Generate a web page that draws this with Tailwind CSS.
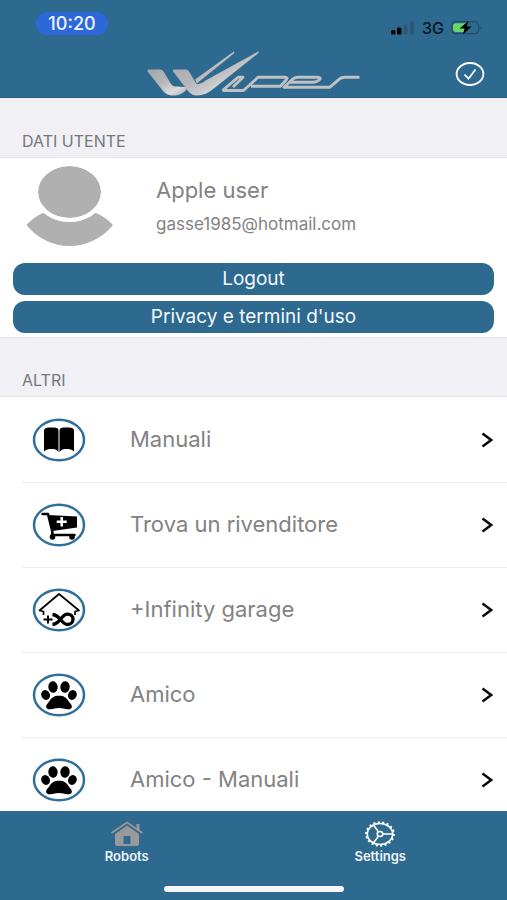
<!DOCTYPE html>
<html lang="it">
<head>
<meta charset="utf-8">
<meta name="viewport" content="width=device-width, initial-scale=1">
<title>Wiper</title>
<script src="https://cdn.jsdelivr.net/npm/@tailwindcss/browser@4"></script>
</head>
<body class="flex h-screen flex-col overflow-hidden bg-white font-['Inter','Liberation_Sans',sans-serif] text-[#828282]">

<svg class="hidden" aria-hidden="true">
  <symbol id="ring" viewBox="0 0 54 44"><ellipse cx="27" cy="22" rx="25" ry="20.3" fill="#fff" stroke="#2f6f9b" stroke-width="2.500"/></symbol>
  <symbol id="paw" viewBox="0 0 54 44">
    <ellipse cx="13.6" cy="22" rx="4.300" ry="5" transform="rotate(-25 13.6 22)"/>
    <ellipse cx="21" cy="14" rx="4.700" ry="5.700" transform="rotate(-8 21 14)"/>
    <ellipse cx="33" cy="14" rx="4.700" ry="5.700" transform="rotate(8 33 14)"/>
    <ellipse cx="40.4" cy="22" rx="4.300" ry="5" transform="rotate(25 40.4 22)"/>
    <path d="M27 22.800c5 0 7.500 2 9.500 5.200 1.600 2.500 3.600 3.700 3.400 5.900-.3 2-2.400 2.500-4.400 2.300-3-.3-5-1.200-8.500-1.200s-5.500.9-8.500 1.200c-2 .2-4.100-.3-4.400-2.300-.2-2.200 1.800-3.400 3.400-5.900 2-3.200 4.500-5.200 9.500-5.200z"/>
  </symbol>
  <symbol id="chevron" viewBox="0 0 12 16"><path d="M1.500 1.500 10.200 8 1.500 14.500" fill="none" stroke="#0b0b0b" stroke-width="2.500"/></symbol>
</svg>

<header class="shrink-0 border-b border-[#245a7d] bg-[#2e6990]">
  <div class="flex h-12 items-start justify-between pt-3 pr-6 pl-9">
    <time class="flex h-[23px] w-[72px] items-center justify-center rounded-full bg-[#2d68d8] text-lg leading-none font-medium text-[#eef4ff]">10:20</time>
    <div class="mt-1 flex h-6 items-center gap-[7px] text-[#071622]">
      <svg class="h-3.5 w-6" viewBox="0 0 24 14" role="img" aria-label="Segnale">
        <rect x="0" y="9" width="4.500" height="4.500" rx="1.500"/><rect x="6" y="6.500" width="4.500" height="7" rx="1.500"/>
        <rect x="12.500" y="3.500" width="4" height="10" rx="1.500" fill="#2a587a"/><rect x="19" y="0.500" width="4" height="13" rx="1.500" fill="#2a587a"/>
      </svg>
      <span class="text-base font-medium">3G</span>
      <svg class="h-4 w-8" viewBox="0 0 32 16" role="img" aria-label="Batteria in carica">
        <rect x="0.700" y="1.700" width="27" height="12" rx="4" fill="none" stroke="#214d68" stroke-width="1.200"/>
        <path d="M5 3.300h10v8.800H5a3 3 0 0 1-3-3V6.300a3 3 0 0 1 3-3z" fill="#68d66b"/>
        <path d="M29.500 6v3.500c1.800-.6 1.800-2.900 0-3.500z" fill="#214d68"/>
        <path d="M17.500 1 8.500 8.500h5l-1.500 6 8.500-8h-5z"/>
      </svg>
    </div>
  </div>
  <div class="grid h-[49px] grid-cols-[1fr_214px_1fr] items-center">
    <svg class="col-start-2 h-[49px] w-[214px]" viewBox="147 48 214 49" role="img" aria-label="Wiper">
      <defs>
        <linearGradient id="metal" x1="0" y1="0" x2="1" y2="1"><stop offset="0" stop-color="#a4a8aa"/><stop offset=".45" stop-color="#b4b6b8"/><stop offset=".75" stop-color="#dcdcdc"/><stop offset="1" stop-color="#a9aaac"/></linearGradient>
      </defs>
      <path fill="url(#metal)" d="M148.500 69.500H160c2 0 3 1 4.200 3l6.500 11c1.500 2.500 3.300 3 6.300 3l8 .5 1.500 2.500c-3.500 4-7.500 6-13.500 6-5.500 0-8.500-2.500-11.500-6.500l-13.500-17c-1-1.500-.7-2.500.5-2.500z"/>
      <path fill="url(#metal)" d="M195 79.500 234.500 51l-.7 2.500-37 30z"/>
      <path fill="url(#metal)" d="M174 69.500H185.500c2 0 3 1 4.200 3l6.800 11.500c3 .5 6-1 9-3.500L259 51l-.8 2.300-43.700 34.700c-5 4.500-11 7.500-18 7.500-4.500 0-7.500-3-10-6.500l-13-17c-1-1.500-.7-2.500.5-2.500z"/>
      <g fill="none" stroke="#bfc1c3" stroke-width="2.900" stroke-linejoin="round">
        <path d="M222.500 90.500H243.500L258 77.300H284.500C288.500 77.300 287 79.300 285 81.300L280.500 86.300H251"/>
        <path d="M222.500 90.500 238 77.300H243L233 87"/>
        <path d="M289 82.300H313.500C317.500 82.300 324 77.300 317.500 77.300H297.500C295 77.300 293.500 78.300 292 79.800L284 87.200H330L339 79.300C341 77.500 342.500 77.300 345 77.300H359.500"/>
      </g>
    </svg>
    <button type="button" aria-label="Conferma" class="mr-[22px] justify-self-end">
      <svg class="h-[26px] w-[30px]" viewBox="0 0 30 26" fill="none" stroke="#fff" stroke-width="1.800"><ellipse cx="15" cy="14" rx="13.400" ry="11"/><path d="m9.500 14.500 4 4.200 7-9.200"/></svg>
    </button>
  </div>
</header>

<main class="min-h-0 flex-1 overflow-hidden">
  <section>
    <h2 class="flex h-[60px] items-end border-b border-[#e6e6e9] bg-[#f0f0f5] px-[22px] pb-1 text-base text-[#77777c]">DATI UTENTE</h2>
    <div class="flex h-[105px] items-start">
      <svg class="mt-2 ml-[26px] h-[82px] w-[88px] shrink-0" viewBox="0 0 88 82" fill="#b0b0b0" role="img" aria-label="Profilo">
        <ellipse cx="43.500" cy="26" rx="31.500" ry="26"/>
        <path d="M17.500 46.700C31 58.700 56 58.700 69.500 46.700c6.500 2.500 12 6.500 17.500 12.300C64 87 23 87 .5 59 6 53.200 11 49.200 17.500 46.700z"/>
        <ellipse cx="43.500" cy="26" rx="33.500" ry="28" fill="none" stroke="#fff" stroke-width="4"/>
      </svg>
      <div class="ml-[42px] pt-5">
        <p class="text-[22px] leading-6">Apple user</p>
        <p class="mt-3 text-[17px] leading-5">gasse1985@hotmail.com</p>
      </div>
    </div>
    <div class="flex flex-col gap-1.5 px-[13px] pb-1 text-[19px] text-[#f4f8fb]">
      <button type="button" class="h-8 rounded-xl bg-[#2e6990]">Logout</button>
      <button type="button" class="h-8 rounded-xl bg-[#2e6990]">Privacy e termini d'uso</button>
    </div>
  </section>

  <section>
    <h2 class="flex h-[60px] items-end border-y border-[#e6e6e9] bg-[#f0f0f5] px-[22px] pb-1 text-base text-[#77777c]">ALTRI</h2>
    <ul class="text-[22px]">
      <li><a href="#manuali" class="flex h-[85px] items-center pr-[14px] pl-8">
        <svg class="h-11 w-[54px]" viewBox="0 0 54 44" aria-hidden="true"><use href="#ring"/><path d="M12 12.500C12 10.500 14 9.500 17 9.500h5c3 0 4.500 1 4.500 3V34c-2-2.500-4-3-7-3-3 0-5.500.5-7.500 2.500zM42 12.500c0-2-2-3-5-3h-5c-3 0-4.500 1-4.500 3V34c2-2.500 4-3 7-3 3 0 5.500.5 7.500 2.500z"/></svg>
        <span class="ml-11 flex-1">Manuali</span><svg class="h-4 w-3" aria-hidden="true"><use href="#chevron"/></svg></a></li>
      <li class="relative before:absolute before:top-0 before:right-0 before:left-[22px] before:h-px before:bg-[#ececec]"><a href="#rivenditore" class="flex h-[85px] items-center pr-[14px] pl-8">
        <svg class="h-11 w-[54px]" viewBox="0 0 54 44" aria-hidden="true"><use href="#ring"/><path d="M16 12 45 13.500V24.500L20.500 28z"/><path d="M10.500 11H16l4.500 18.500-.5 2.500H42.500" fill="none" stroke="#000" stroke-width="2.500" stroke-linejoin="round" stroke-linecap="round"/><circle cx="20.500" cy="34" r="2.800"/><circle cx="40" cy="34" r="2.800"/><path d="M29.700 14v9.500M24.700 18.700h10" stroke="#fff" stroke-width="2.500"/></svg>
        <span class="ml-11 flex-1">Trova un rivenditore</span><svg class="h-4 w-3" aria-hidden="true"><use href="#chevron"/></svg></a></li>
      <li class="relative before:absolute before:top-0 before:right-0 before:left-[22px] before:h-px before:bg-[#ececec]"><a href="#garage" class="flex h-[85px] items-center pr-[14px] pl-8">
        <svg class="h-11 w-[54px]" viewBox="0 0 54 44" aria-hidden="true"><use href="#ring"/><g fill="none" stroke="#000"><path d="M11.500 27v-3.500l-4-1L27 6l20 16.500-4 1V27" stroke-width="1.700" stroke-linejoin="round"/><path d="M11.500 31.500h9M16 27.500v8" stroke-width="2"/><path d="M20.500 26.500c4.500.5 6.500 3 8.500 5.500s4 4.500 6.500 4.500c3.500 0 5.500-2.500 5.500-5.200s-2-5.200-5.500-5.200c-2.500 0-4.500 2-6.500 4.700s-4 5.200-8.500 5.700" stroke-width="3.300"/></g></svg>
        <span class="ml-11 flex-1">+Infinity garage</span><svg class="h-4 w-3" aria-hidden="true"><use href="#chevron"/></svg></a></li>
      <li class="relative before:absolute before:top-0 before:right-0 before:left-[22px] before:h-px before:bg-[#ececec]"><a href="#amico" class="flex h-[85px] items-center pr-[14px] pl-8">
        <svg class="h-11 w-[54px]" viewBox="0 0 54 44" aria-hidden="true"><use href="#ring"/><use href="#paw"/></svg>
        <span class="ml-11 flex-1">Amico</span><svg class="h-4 w-3" aria-hidden="true"><use href="#chevron"/></svg></a></li>
      <li class="relative before:absolute before:top-0 before:right-0 before:left-[22px] before:h-px before:bg-[#ececec]"><a href="#amico-manuali" class="flex h-[85px] items-center pr-[14px] pl-8">
        <svg class="h-11 w-[54px]" viewBox="0 0 54 44" aria-hidden="true"><use href="#ring"/><use href="#paw"/></svg>
        <span class="ml-11 flex-1">Amico - Manuali</span><svg class="h-4 w-3" aria-hidden="true"><use href="#chevron"/></svg></a></li>
    </ul>
  </section>
</main>

<footer class="shrink-0 bg-[#2e6990] pb-2">
  <nav class="grid grid-cols-2 pt-2.5 text-[13px] font-semibold text-[#eef4f8]">
    <a href="#robots" class="flex flex-col items-center">
      <svg class="h-[26px] w-[34px]" viewBox="0 0 34 26" fill="#999" aria-hidden="true"><path fill-rule="evenodd" d="M17 4.500 29 13v9.500a2.500 2.500 0 0 1-2.500 2.500h-19A2.500 2.500 0 0 1 5 22.500V13zM14.500 15c-.7 0-1 .3-1 1v7h7v-7c0-.7-.3-1-1-1z"/><path d="M26.500 3h3v8l-3-2.200z"/><path d="M1.500 12 17 1.500 32.500 12" fill="none" stroke="#999" stroke-width="1.600"/></svg>
      <span class="leading-[18px]">Robots</span></a>
    <a href="#settings" class="flex flex-col items-center">
      <svg class="h-[26px] w-[32px]" viewBox="0 0 32 26" fill="none" stroke="#fff" aria-hidden="true"><ellipse cx="16" cy="13" rx="12.700" ry="10.500" stroke-width="1.700"/><ellipse cx="16" cy="13" rx="14" ry="11.800" stroke-width="1.800" pathLength="180" stroke-dasharray="4.500 5.500"/><ellipse cx="16" cy="13" rx="2.800" ry="2.500" stroke-width="1.500"/><path d="M19 13H28.500M14.500 11 9.500 4M14.500 15 9.500 22" stroke-width="1.600"/></svg>
      <span class="leading-[18px]">Settings</span></a>
  </nav>
  <div class="mx-auto mt-[21px] h-1.5 w-[180px] rounded-full bg-[#f4f6f8]"></div>
</footer>
</body>
</html>
